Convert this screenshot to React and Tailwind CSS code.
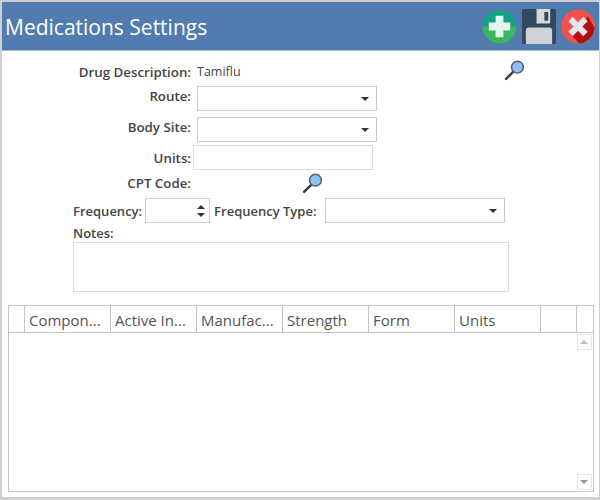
import React from 'react';

const font = "font-['Open_Sans','Noto_Sans',sans-serif]";

// Toolbar icons
const AddIcon = () => (
  <svg width="35" height="35" viewBox="0 0 36 36">
    <circle cx="18" cy="18" r="17.5" fill="#16a085" />
    <path d="M.5 18a17.5 17.5 0 0 0 35 0z" fill="#3cb563" />
    <path d="M14 7h8v7h7v8h-7v7h-8v-7H7v-8h7z" fill="#e4f5ee" />
  </svg>
);

const SaveIcon = () => (
  <svg width="34" height="35" viewBox="0 0 35 36">
    <path d="M2 0h31a2 2 0 0 1 2 2v32a2 2 0 0 1-2 2H2a2 2 0 0 1-2-2V2a2 2 0 0 1 2-2z" fill="#34495e" />
    <path d="M15 0h14v14a1 1 0 0 1-1 1H15z" fill="#d5d8da" />
    <rect x="23" y="3" width="4" height="9" fill="#34495e" />
    <path d="M7 19h21a3 3 0 0 1 3 3v14H4V22a3 3 0 0 1 3-3z" fill="#cfd2d5" />
  </svg>
);

const CloseIcon = () => (
  <svg width="34" height="35" viewBox="0 0 35 36">
    <circle cx="17.5" cy="18" r="17.5" fill="#f0524c" />
    <path d="M28 8l6.5 11A17.5 17.5 0 0 1 19 35.4L9 25z" fill="#b01010" />
    <path d="M12 8l5.5 5.5L23 8l4.500 4.500-5.500 5.500 5.500 5.500L23 28l-5.500-5.500L12 28l-4.500-4.500 5.500-5.500-5.500-5.500z" fill="#e4e6ea" />
  </svg>
);

const SearchIcon = () => (
  <svg width="21" height="21" viewBox="0 0 20 20">
    <path d="M8.500 11.500L2 18" stroke="#3f3f3f" strokeWidth="2.500" strokeLinecap="round" />
    <circle cx="12.800" cy="6.800" r="5.600" fill="#8ec0fb" stroke="#55606c" strokeWidth="1.400" />
  </svg>
);

const Caret = () => (
  <span className="w-0 h-0 border-x-[4px] border-x-transparent border-t-[4px] border-t-[#333]" />
);

const Label = ({ children, className = 'text-[13px]' }) => (
  <span className={`leading-[18px] font-semibold text-[#444] whitespace-nowrap ${className}`}>{children}</span>
);

const FormLabel = ({ children, className = '' }) => (
  <Label className={`w-[189px] text-right text-[13.3px] ${className}`}>{children}</Label>
);

const Select = () => (
  <div className="w-[180px] h-[25px] bg-white border border-[#ccc] flex items-center justify-end pr-[7px]">
    <Caret />
  </div>
);

const columns = [
  { name: '', width: 'w-[16px]' },
  { name: 'Compon...', width: 'w-[86px]' },
  { name: 'Active In...', width: 'w-[86px]' },
  { name: 'Manufac...', width: 'w-[86px]' },
  { name: 'Strength', width: 'w-[86px]' },
  { name: 'Form', width: 'w-[86px]' },
  { name: 'Units', width: 'w-[86px]' },
  { name: '', width: 'w-[36px]' },
  { name: '', width: 'flex-1' },
];

export default function App() {
  return (
    <div className={`${font} w-[600px] h-[500px] bg-[#cfcfcf] pt-[2px] pl-[2px] pr-[1.500px] pb-[3px] overflow-hidden`}>
      <div className="h-full bg-white flex flex-col">
        {/* header */}
        <div className="h-[49px] shrink-0 bg-[#527bb0] flex items-center justify-between pl-[3px] pr-[4px] border-b border-[#a9bcd6]">
          <h1 className="text-[21px] leading-none text-white font-normal mt-[3px]">Medications Settings</h1>
          <div className="flex items-center gap-[5px] mt-[1px]">
            <AddIcon />
            <SaveIcon />
            <CloseIcon />
          </div>
        </div>

        {/* form */}
        <div className="h-[254px] shrink-0 flex flex-col">
          <div className="flex items-center h-[20px] mt-[11px]">
            <FormLabel>Drug Description:</FormLabel>
            <span className="ml-[6px] mt-[1px] text-[12.500px] text-[#444]">Tamiflu</span>
            <span className="ml-[263px] -mt-[3px]"><SearchIcon /></span>
          </div>
          <div className="flex items-center mt-[4px]">
            <FormLabel className="-mt-[6px]">Route:</FormLabel>
            <div className="ml-[6px]"><Select /></div>
          </div>
          <div className="flex items-center mt-[6px]">
            <FormLabel className="-mt-[5px]">Body Site:</FormLabel>
            <div className="ml-[6px]"><Select /></div>
          </div>
          <div className="flex items-center mt-[3px]">
            <FormLabel>Units:</FormLabel>
            <div className="ml-[2px] w-[180px] h-[25px] border border-[#ddd] bg-white" />
          </div>
          <div className="flex items-center h-[20px] mt-[3px]">
            <FormLabel>CPT Code:</FormLabel>
            <span className="ml-[111px]"><SearchIcon /></span>
          </div>
          <div className="flex items-center mt-[5px] pl-[71px]">
            <Label>Frequency:</Label>
            <div className="ml-[3px] w-[65px] h-[25px] border border-[#ccc] flex flex-col items-end justify-center gap-[4px] pr-[4px]">
              <span className="w-0 h-0 border-x-[4px] border-x-transparent border-b-[4px] border-b-[#333]" />
              <Caret />
            </div>
            <Label className="ml-[4px] text-[13px]">Frequency Type:</Label>
            <div className="ml-[9px]"><Select /></div>
          </div>
          <Label className="ml-[71px] mt-[1px] text-[13px]">Notes:</Label>
          <div className="ml-[71px] w-[436px] h-[50px] border border-[#ddd] bg-white" />
        </div>

        {/* grid */}
        <div className="ml-[6px] mr-[5px] h-[187px] border border-[#c4c4c4] flex flex-col">
          <div className="h-[27px] shrink-0 flex border-b border-[#c4c4c4]">
            {columns.map((col, i) => (
              <div
                key={i}
                className={`${col.width} h-full border-r last:border-r-0 border-[#c4c4c4] pl-[4px] text-[15px] leading-[28px] text-[#555] whitespace-nowrap`}
              >
                {col.name}
              </div>
            ))}
          </div>
          <div className="flex-1 flex flex-col items-end justify-between pr-[1px] pt-[1px] pb-[1px]">
            <div className="w-[15px] h-[16px] border border-[#e4e4e4] flex items-center justify-center">
              <span className="w-0 h-0 border-x-[4px] border-x-transparent border-b-[4px] border-b-[#bbb]" />
            </div>
            <div className="w-[15px] h-[16px] border border-[#e4e4e4] flex items-center justify-center">
              <span className="w-0 h-0 border-x-[4px] border-x-transparent border-t-[4px] border-t-[#999]" />
            </div>
          </div>
        </div>
      </div>
    </div>
  );
}
